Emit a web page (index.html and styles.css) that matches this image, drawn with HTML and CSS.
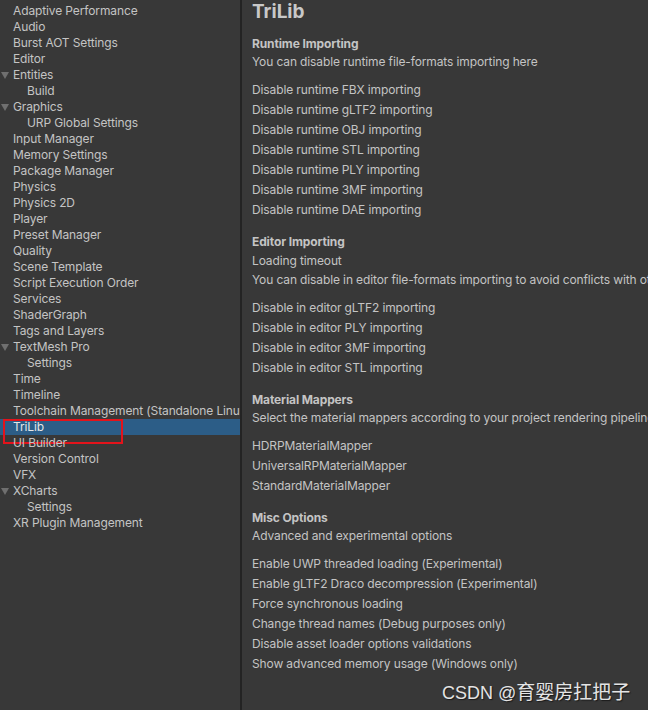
FILE: index.html
```html
<!DOCTYPE html>
<html>
<head>
    <meta charset="utf-8">
    <link rel="stylesheet" href="styles.css">
</head>
<body>
    <div class="window">
        <ul class="tree">
            <li class="row">Adaptive Performance</li>
            <li class="row">Audio</li>
            <li class="row">Burst AOT Settings</li>
            <li class="row">Editor</li>
            <li class="row parent"><span class="arrow"></span>Entities</li>
            <li class="row child">Build</li>
            <li class="row parent"><span class="arrow"></span>Graphics</li>
            <li class="row child">URP Global Settings</li>
            <li class="row">Input Manager</li>
            <li class="row">Memory Settings</li>
            <li class="row">Package Manager</li>
            <li class="row">Physics</li>
            <li class="row">Physics 2D</li>
            <li class="row">Player</li>
            <li class="row">Preset Manager</li>
            <li class="row">Quality</li>
            <li class="row">Scene Template</li>
            <li class="row">Script Execution Order</li>
            <li class="row">Services</li>
            <li class="row">ShaderGraph</li>
            <li class="row">Tags and Layers</li>
            <li class="row parent"><span class="arrow"></span>TextMesh Pro</li>
            <li class="row child">Settings</li>
            <li class="row">Time</li>
            <li class="row">Timeline</li>
            <li class="row">Toolchain Management (Standalone Linux)</li>
            <li class="row selected">TriLib<span class="mark"></span></li>
            <li class="row">UI Builder</li>
            <li class="row">Version Control</li>
            <li class="row">VFX</li>
            <li class="row parent"><span class="arrow"></span>XCharts</li>
            <li class="row child">Settings</li>
            <li class="row">XR Plugin Management</li>
        </ul>

        <div class="inspector">
            <h1>TriLib</h1>

            <section class="group">
                <h2>Runtime Importing</h2>
                <p class="desc">You can disable runtime file-formats importing here</p>
                <ul class="options">
                    <li>Disable runtime FBX importing</li>
                    <li>Disable runtime gLTF2 importing</li>
                    <li>Disable runtime OBJ importing</li>
                    <li>Disable runtime STL importing</li>
                    <li>Disable runtime PLY importing</li>
                    <li>Disable runtime 3MF importing</li>
                    <li>Disable runtime DAE importing</li>
                </ul>
            </section>

            <section class="group">
                <h2>Editor Importing</h2>
                <div class="field">Loading timeout</div>
                <p class="desc">You can disable in editor file-formats importing to avoid conflicts with other editor importers</p>
                <ul class="options">
                    <li>Disable in editor gLTF2 importing</li>
                    <li>Disable in editor PLY importing</li>
                    <li>Disable in editor 3MF importing</li>
                    <li>Disable in editor STL importing</li>
                </ul>
            </section>

            <section class="group">
                <h2>Material Mappers</h2>
                <p class="desc">Select the material mappers according to your project rendering pipeline</p>
                <ul class="options">
                    <li>HDRPMaterialMapper</li>
                    <li>UniversalRPMaterialMapper</li>
                    <li>StandardMaterialMapper</li>
                </ul>
            </section>

            <section class="group">
                <h2>Misc Options</h2>
                <p class="desc">Advanced and experimental options</p>
                <ul class="options">
                    <li>Enable UWP threaded loading (Experimental)</li>
                    <li>Enable gLTF2 Draco decompression (Experimental)</li>
                    <li>Force synchronous loading</li>
                    <li>Change thread names (Debug purposes only)</li>
                    <li>Disable asset loader options validations</li>
                    <li>Show advanced memory usage (Windows only)</li>
                </ul>
            </section>
        </div>

        <div class="watermark">CSDN @<span class="cjk">育婴房扛把子</span></div>
    </div>
</body>
</html>
```

FILE: styles.css
```css
body {
    margin: 0;
    padding: 0;
    background-color: #383838;
    font-family: Inter, "Noto Sans", sans-serif;
    font-size: 12px;
    letter-spacing: -0.12px;
    color: #c4c4c4;
    overflow: hidden;
}
ul {
    list-style: none;
    margin: 0;
    padding: 0;
}
.window {
    position: relative;
    display: flex;
    width: 648px;
    height: 710px;
    overflow: hidden;
}

/* settings tree */
.tree {
    flex: none;
    width: 240px;
    padding-top: 3px;
    border-right: 2px solid #232323;
    overflow: hidden;
}
.row {
    position: relative;
    height: 16px;
    line-height: 16px;
    padding-left: 13px;
    white-space: nowrap;
}
.row.child {
    padding-left: 27px;
}
.row.selected {
    background-color: #2c5d87;
    color: #e6e6e6;
}
.arrow {
    position: absolute;
    left: 1px;
    top: 5px;
    width: 0;
    height: 0;
    border-left: 4px solid transparent;
    border-right: 4px solid transparent;
    border-top: 7px solid #6f6f6f;
}
.mark {
    position: absolute;
    left: 3px;
    top: 0;
    width: 116px;
    height: 21px;
    border: 2px solid #e3131b;
}

/* inspector */
.inspector {
    flex: 1;
    min-width: 0;
    padding-left: 10px;
    white-space: nowrap;
}
h1 {
    margin: 0 0 11px 0;
    height: 24px;
    line-height: 24px;
    font-size: 19px;
    font-weight: bold;
    letter-spacing: 0;
    color: #c8c8c8;
}
.group {
    margin-bottom: 13px;
}
h2 {
    margin: 0;
    height: 18px;
    line-height: 18px;
    font-size: 12px;
    font-weight: bold;
    color: #c4c4c4;
}
.field {
    height: 20px;
    line-height: 20px;
}
.desc {
    margin: 0 0 9px 0;
    height: 18px;
    line-height: 18px;
}
.options li {
    height: 20px;
    line-height: 20px;
}

.watermark {
    position: absolute;
    left: 442px;
    top: 677px;
    font-family: "Liberation Sans", "Noto Sans CJK SC", sans-serif;
    font-size: 18px;
    letter-spacing: 0;
    color: #e4e4e4;
    text-shadow: 1px 1px 1px #1a1a1a;
}
.watermark .cjk {
    font-family: "Noto Sans CJK SC", sans-serif;
    font-size: 19px;
}
```
